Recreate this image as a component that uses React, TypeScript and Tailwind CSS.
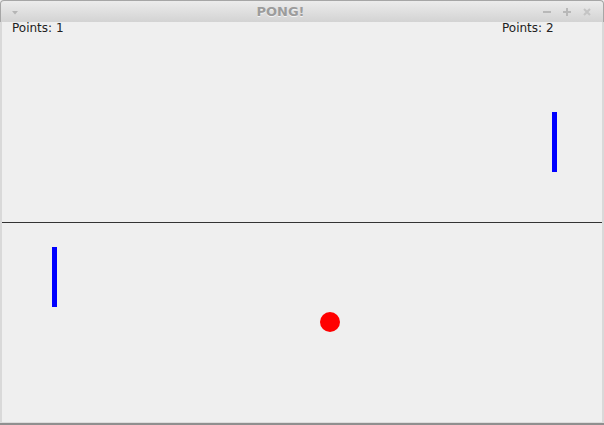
import React from 'react';

const font = { fontFamily: '"DejaVu Sans", Verdana, sans-serif' };

function TitleBar() {
  return (
    <div className="relative h-[22px] flex items-center rounded-t-[4px] border-t border-x border-[#a6a6a6] bg-gradient-to-b from-[#ececec] to-[#d3d3d3]">
      <svg width="6" height="4" viewBox="0 0 6 4" className="ml-[11px] mt-[3px]">
        <path d="M0 0 H6 L3 3.5 Z" fill="#b5b5b5" />
      </svg>
      <div className="flex-1 flex justify-center">
        <span
          className="text-[13px] font-bold leading-none text-[#9c9c9c] [text-shadow:0_1px_0_#f4f4f4]"
          style={font}
        >
          PONG!
        </span>
      </div>
      <div className="flex items-center gap-[12px] mr-[12px] mt-[1px]">
        <svg width="8" height="8" viewBox="0 0 8 8">
          <rect x="0" y="3" width="8" height="2" fill="#b8b8b8" />
        </svg>
        <svg width="8" height="8" viewBox="0 0 8 8">
          <rect x="0" y="3" width="8" height="2" fill="#b8b8b8" />
          <rect x="3" y="0" width="2" height="8" fill="#b8b8b8" />
        </svg>
        <svg width="8" height="8" viewBox="0 0 8 8">
          <path d="M1 1 L7 7 M7 1 L1 7" stroke="#c4c4c4" strokeWidth="2" />
        </svg>
      </div>
    </div>
  );
}

function Court() {
  return (
    <div className="relative h-[400px] border-x-2 border-[#d9d9d9] bg-[#efefef] flex flex-col" style={font}>
      <div className="h-[200px]" />
      <div className="h-px bg-[#333333]" />
      <div className="flex-1" />

      <span className="absolute left-[10px] top-[-1px] text-[12px] leading-[14px] text-[#222]">Points: 1</span>
      <span className="absolute left-[500px] top-[-1px] text-[12px] leading-[14px] text-[#222]">Points: 2</span>

      <div className="absolute left-[50px] top-[225px] w-[5px] h-[60px] bg-[#0000ff]" />
      <div className="absolute left-[550px] top-[90px] w-[5px] h-[60px] bg-[#0000ff]" />
      <div className="absolute left-[318px] top-[290px] w-[20px] h-[20px] rounded-full bg-[#ff0000]" />
    </div>
  );
}

export default function App() {
  return (
    <div className="w-[604px] h-[425px] bg-[#efefef] flex flex-col overflow-hidden">
      <TitleBar />
      <Court />
      <div className="h-px bg-[#dcdcdc]" />
      <div className="h-[2px] bg-[#8f8f8f]" />
    </div>
  );
}
